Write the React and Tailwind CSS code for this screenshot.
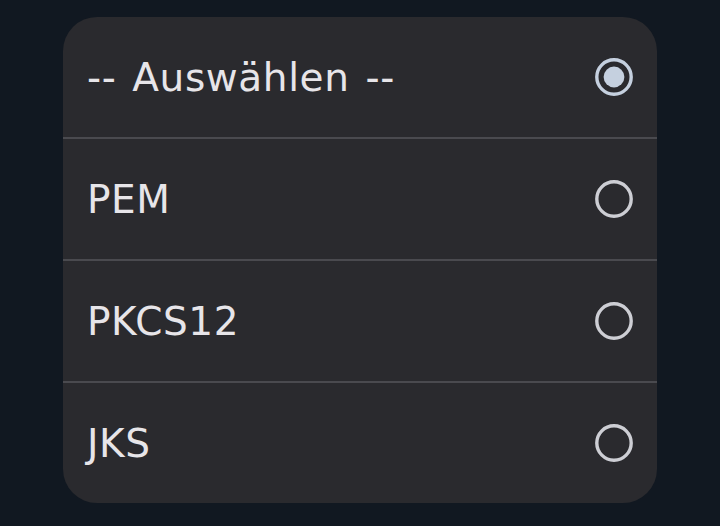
import { useState } from 'react';

const options = ['-- Auswählen --', 'PEM', 'PKCS12', 'JKS'];

function Radio({ checked }) {
    return (
        <svg width="40" height="40" viewBox="0 0 40 40" className="shrink-0">
            <circle cx="20" cy="20" r="17.2" fill="none" stroke={checked ? '#c5d0df' : '#cdced4'} strokeWidth="3.4" />
            {checked && <circle cx="20" cy="20" r="10.4" fill="#c5d0df" />}
        </svg>
    );
}

export default function App() {
    const [selected, setSelected] = useState(0);

    return (
        <div className="w-[720px] h-[526px] bg-[#111821] flex justify-center pt-[17px] font-['DejaVu_Sans',sans-serif]">
            <div className="w-[594px] h-[486px] bg-[#2a2a2e] rounded-[34px] overflow-hidden flex flex-col">
                {options.map((opt, i) => (
                    <div
                        key={opt}
                        onClick={() => setSelected(i)}
                        className={`h-[120px] shrink-0 flex items-center justify-between pl-[24px] pr-[23px] cursor-pointer ${
                            i !== options.length - 1 ? 'border-b-2 border-[#4a4a4f] h-[122px]' : ''
                        }`}
                    >
                        <span className="text-[39px] leading-none tracking-[0.6px] [word-spacing:3px] text-[#e7e5e9]">{opt}</span>
                        <Radio checked={selected === i} />
                    </div>
                ))}
            </div>
        </div>
    );
}
